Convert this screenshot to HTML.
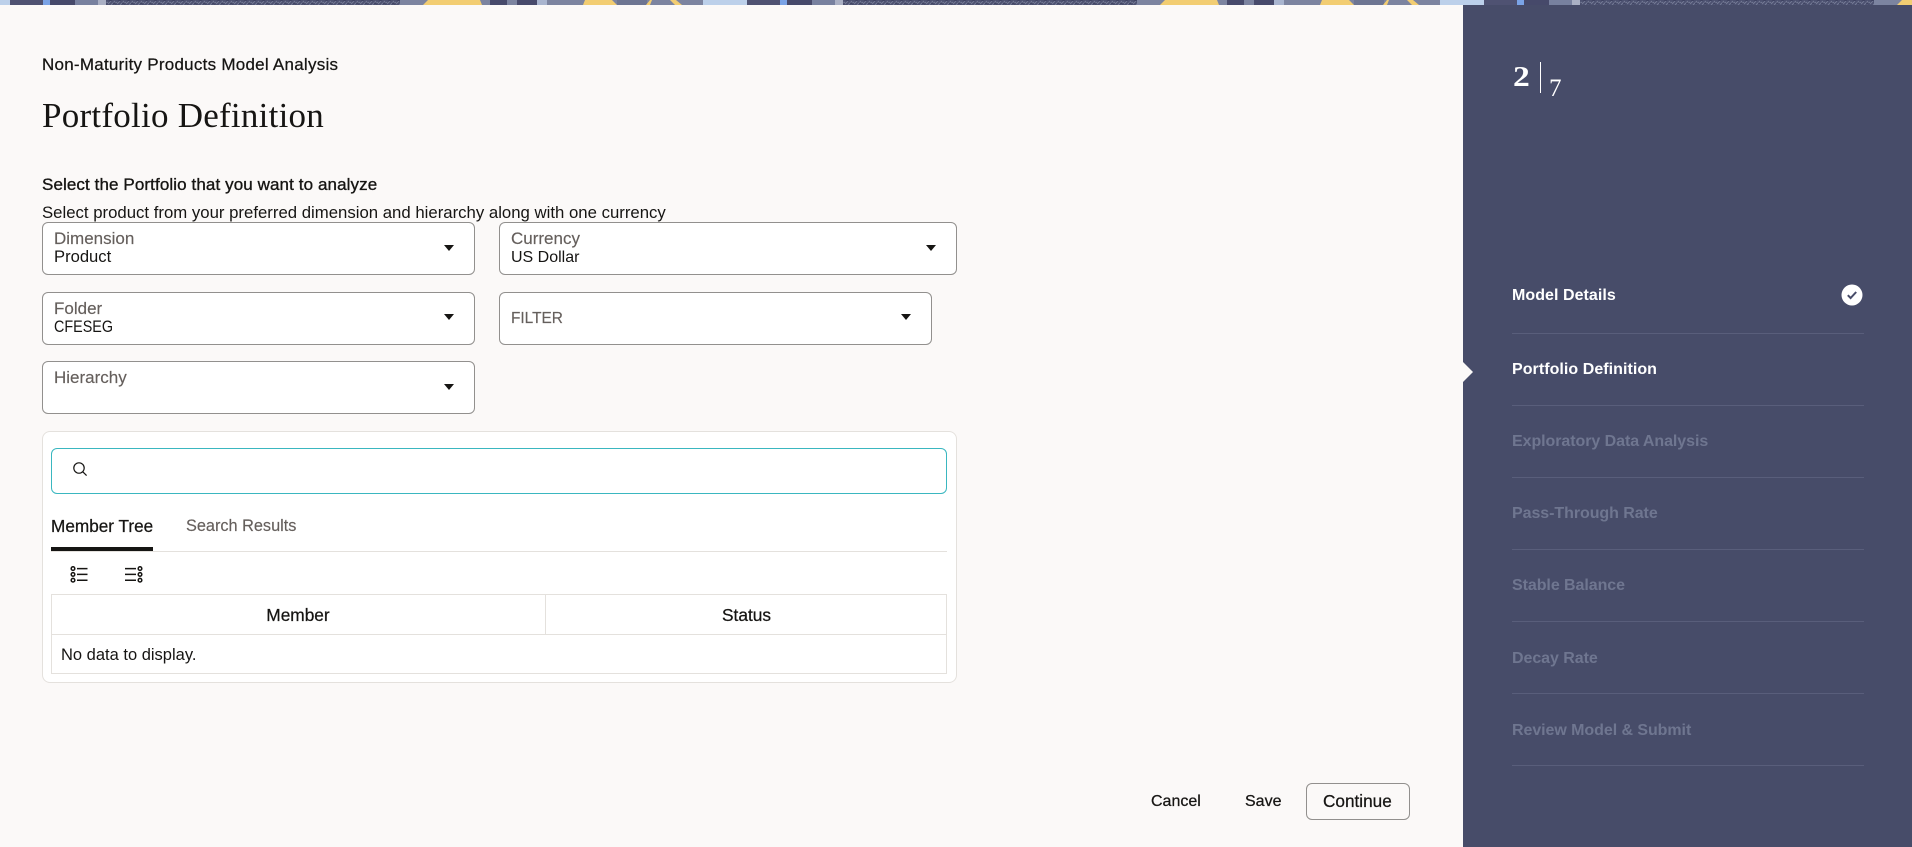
<!DOCTYPE html>
<html lang="en"><head><meta charset="utf-8"><title>Portfolio Definition</title>
<style>
html,body{margin:0;padding:0;width:1912px;height:847px;overflow:hidden;background:#fbf9f8}
body{position:relative;font-family:"Liberation Sans",sans-serif;color:#161513}
.t{position:absolute;white-space:nowrap;line-height:20px;height:20px}
.m{-webkit-text-stroke:.25px currentColor}
.box{position:absolute;box-sizing:border-box;background:#fff;border:1px solid #92908e;border-radius:6px}
.lab{color:#655f5c;font-size:17px;-webkit-text-stroke:.15px currentColor}
.val{font-size:16.6px}
.arr{position:absolute;width:0;height:0;border-left:5.5px solid transparent;border-right:5.5px solid transparent;border-top:6px solid #161513}
.side{position:absolute;left:1463px;top:5px;width:449px;height:842px;background:#474c69}
.div{position:absolute;left:1512px;width:352px;height:1px;background:#595e7b}
.st{font-size:16px;font-weight:bold;left:1512px}
.off{color:#6f7690;letter-spacing:-.06px}
.on{color:#fff;letter-spacing:.05px}
</style></head><body>
<svg width="1912" height="5" style="position:absolute;left:0;top:0;display:block" xmlns="http://www.w3.org/2000/svg">
<defs>
<pattern id="tx" width="9" height="5" patternUnits="userSpaceOnUse"><rect width="9" height="5" fill="#4c5170"/><path d="M0 4L3 1M3 5L7 1M6 4L9 2" stroke="#757b96" stroke-width="1"/><path d="M1 1L4 0M5 3L8 4" stroke="#3d4160" stroke-width="1"/></pattern>
<pattern id="bn" width="737" height="5" patternUnits="userSpaceOnUse">
<rect width="737" height="5" fill="#7c84a0"/>
<rect x="0" width="10" height="5" fill="#bcd0ea"/>
<rect x="10" width="33" height="5" fill="#4f5272"/>
<rect x="43" width="7" height="5" fill="#7aa3e6"/>
<rect x="50" width="25" height="5" fill="#46496a"/>
<rect x="75" width="23" height="5" fill="#78819f"/>
<rect x="98" width="8" height="5" fill="#aab0c4"/>
<rect x="106" width="294" height="5" fill="url(#tx)"/>
<polygon points="423,5 428,0 480,0 482,5" fill="#f2cd72"/>
<rect x="490" width="17" height="5" fill="#474a6b"/>
<rect x="517" width="20" height="5" fill="#474a6b"/>
<rect x="537" width="10" height="5" fill="#a9b5cf"/>
<polygon points="583,5 585,0 612,0 617,5" fill="#f2cd72"/>
<rect x="617" width="30" height="5" fill="#6d7592"/>
<polygon points="646,5 650,0 652,0 650,5" fill="#f2cd72"/>
<polygon points="670,0 676,0 682,5 675,5" fill="#f2cd72"/>
<rect x="703" width="34" height="5" fill="#bcd0ea"/>
</pattern>
</defs>
<rect width="1912" height="5" fill="url(#bn)"/>
</svg>

<div class="t m" style="left:42px;top:55px;font-size:17px;letter-spacing:.25px">Non-Maturity Products Model Analysis</div>
<div class="t" style="left:42px;top:96px;height:40px;line-height:40px;font-family:'Liberation Serif',serif;font-size:35px;letter-spacing:.25px">Portfolio Definition</div>
<div class="t m" style="left:42px;top:175px;font-size:17px;letter-spacing:.1px;-webkit-text-stroke-width:.35px">Select the Portfolio that you want to analyze</div>
<div class="t" style="left:42px;top:203px;font-size:16.75px">Select product from your preferred dimension and hierarchy along with one currency</div>

<div class="box" style="left:42px;top:222px;width:433px;height:53px"></div>
<div class="t lab" style="left:54px;top:229px">Dimension</div><div class="t val" style="left:54px;top:247px">Product</div>
<div class="arr" style="left:443.5px;top:245px"></div>

<div class="box" style="left:499px;top:222px;width:458px;height:53px"></div>
<div class="t lab" style="left:511px;top:229px">Currency</div><div class="t val" style="left:511px;top:248px;font-size:16px">US Dollar</div>
<div class="arr" style="left:925.5px;top:245px"></div>

<div class="box" style="left:42px;top:292px;width:433px;height:53px"></div>
<div class="t lab" style="left:54px;top:299px">Folder</div><div class="t val" style="left:54px;top:317px;transform:scaleX(.865);transform-origin:0 50%">CFESEG</div>
<div class="arr" style="left:443.5px;top:314px"></div>

<div class="box" style="left:499px;top:292px;width:433px;height:53px"></div>
<div class="t lab" style="left:511px;top:309px;font-size:15.4px">FILTER</div>
<div class="arr" style="left:900.5px;top:314px"></div>

<div class="box" style="left:42px;top:361px;width:433px;height:53px"></div>
<div class="t lab" style="left:54px;top:368px">Hierarchy</div>
<div class="arr" style="left:443.5px;top:384px"></div>

<div class="box" style="left:42px;top:431px;width:915px;height:252px;border-color:#e4e1dd;border-radius:8px"></div>
<div class="box" style="left:51px;top:448px;width:896px;height:46px;border-color:#3ab7c0"></div>
<svg width="16" height="16" viewBox="0 0 16 16" style="position:absolute;left:72px;top:461px" fill="none" stroke="#161513" stroke-width="1.2"><circle cx="7" cy="7" r="5.2"/><path d="M10.8 10.8L14.6 14.6"/></svg>

<div class="t m" style="left:51px;top:516px;font-size:17.2px">Member Tree</div>
<div class="t lab" style="left:186px;top:516px;font-size:16.3px">Search Results</div>
<div style="position:absolute;left:51px;top:551px;width:896px;height:1px;background:#e4e1dd"></div>
<div style="position:absolute;left:51px;top:547px;width:102px;height:4px;background:#161513"></div>

<svg width="18" height="17" viewBox="0 0 18 17" style="position:absolute;left:70px;top:566px" fill="none" stroke="#161513" stroke-width="1.5"><circle cx="3" cy="2.6" r="1.8"/><circle cx="3" cy="8.4" r="1.8"/><circle cx="3" cy="14.2" r="1.8"/><path d="M7 2.6H17.5M7 8.4H17.5M7 14.2H17.5"/></svg>
<svg width="18" height="17" viewBox="0 0 18 17" style="position:absolute;left:125px;top:566px" fill="none" stroke="#161513" stroke-width="1.5"><circle cx="15" cy="2.6" r="1.8"/><circle cx="15" cy="8.4" r="1.8"/><circle cx="15" cy="14.2" r="1.8"/><path d="M0 2.6H11M0 8.4H11M0 14.2H11"/></svg>

<div class="box" style="left:51px;top:594px;width:896px;height:80px;border-color:#e4e1dd;border-radius:0"></div>
<div style="position:absolute;left:51px;top:634px;width:896px;height:1px;background:#e4e1dd"></div>
<div style="position:absolute;left:545px;top:594px;width:1px;height:40px;background:#e4e1dd"></div>
<div class="t m" style="left:51px;width:494px;text-align:center;top:605px;font-size:17.3px">Member</div>
<div class="t m" style="left:546px;width:401px;text-align:center;top:605px;font-size:17.3px">Status</div>
<div class="t" style="left:61px;top:645px;font-size:16.5px">No data to display.</div>

<div class="t m" style="left:1151px;top:792px;font-size:16px">Cancel</div>
<div class="t m" style="left:1245px;top:792px;font-size:16px">Save</div>
<div class="box" style="left:1306px;top:783px;width:104px;height:37px;background:transparent"></div>
<div class="t m" style="left:1323px;top:791px;font-size:17.2px">Continue</div>

<div class="side"></div>
<div class="t" style="left:1513px;top:60px;height:36px;line-height:36px;font-family:'Liberation Serif',serif;font-size:28px;color:#fff;font-weight:bold;transform:scaleX(1.2);transform-origin:0 50%">2</div>
<div style="position:absolute;left:1540px;top:62px;width:1px;height:31px;background:#fff"></div>
<div class="t" style="left:1549px;top:73px;height:32px;line-height:32px;font-family:'Liberation Serif',serif;font-size:25px;color:#fff">7</div>

<div class="t st on" style="top:286px">Model Details</div>
<svg width="22" height="22" viewBox="0 0 22 22" style="position:absolute;left:1841px;top:284px"><circle cx="11" cy="11" r="10.5" fill="#fff"/><path d="M6.8 11.2L9.6 14L15.2 8" fill="none" stroke="#474c69" stroke-width="2"/></svg>
<div class="div" style="top:333px"></div>
<div style="position:absolute;left:1463px;top:362px;width:0;height:0;border-top:10px solid transparent;border-bottom:10px solid transparent;border-left:10px solid #fbf9f8"></div>
<div class="t st on" style="top:360px">Portfolio Definition</div>
<div class="div" style="top:405px"></div>
<div class="t st off" style="top:432px">Exploratory Data Analysis</div>
<div class="div" style="top:477px"></div>
<div class="t st off" style="top:504px">Pass-Through Rate</div>
<div class="div" style="top:549px"></div>
<div class="t st off" style="top:576px">Stable Balance</div>
<div class="div" style="top:621px"></div>
<div class="t st off" style="top:649px">Decay Rate</div>
<div class="div" style="top:693px"></div>
<div class="t st off" style="top:721px">Review Model &amp; Submit</div>
<div class="div" style="top:765px"></div>
</body></html>
